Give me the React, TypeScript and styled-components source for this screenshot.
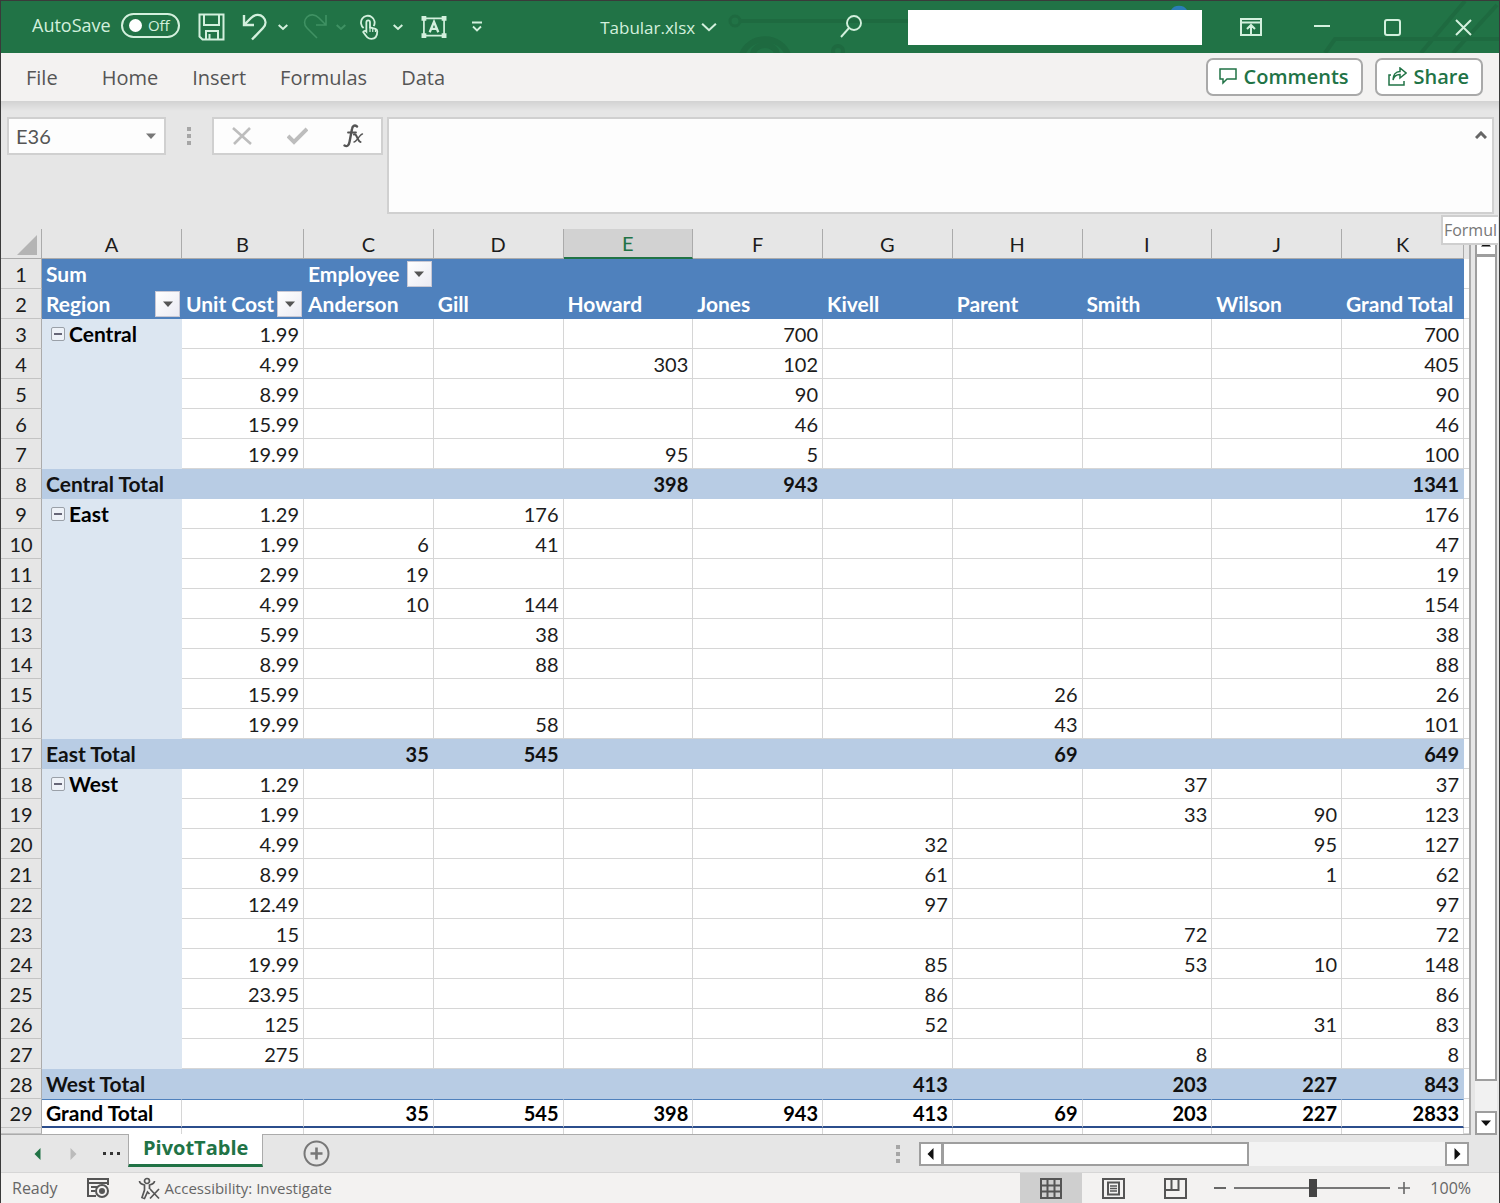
import React from "react";
import styled, { createGlobalStyle, css } from "styled-components";

const uiFont = `"Open Sans", "Noto Sans", sans-serif`;
const cellFont = `Lato, "Open Sans", sans-serif`;

const color = {
  green: "#217346",
  mint: "#d3f0dd",
  chrome: "#e6e6e6",
  ribbon: "#f3f2f1",
  line: "#ababab",
  grid: "#d6d6d6",
  header: "#4f81bd",
  region: "#dce6f1",
  subtotal: "#b8cce4",
};

const GlobalStyle = createGlobalStyle`
  *, *::before, *::after { box-sizing: border-box; }
  body { margin: 0; background: ${color.chrome}; }
  button, input, textarea { font: inherit; color: inherit; }
  button { border: 0; padding: 0; background: none; }
`;

const Window = styled.div`
  display: flex;
  flex-direction: column;
  min-height: 100vh;
  border: 1px solid #3a3a3a;
  overflow: hidden;
  background: ${color.chrome};
  font-family: ${uiFont};
  color: #555;
`;

/* ---------- title bar ---------- */

const TitleBar = styled.header`
  position: relative;
  isolation: isolate;
  display: grid;
  grid-template-columns: 40% 16% 1fr auto auto;
  align-items: center;
  height: 52px;
  background: ${color.green};
  color: ${color.mint};
`;

const Circuit = styled.svg`
  position: absolute;
  right: 0;
  top: 0;
  z-index: -1;
  pointer-events: none;
`;

const QuickAccess = styled.div`
  display: flex;
  align-items: center;
  padding-left: 31px;
  font-size: 18px;
`;

const AutoSave = styled.label`
  display: flex;
  align-items: center;
  gap: 10px;
  padding-bottom: 4px;
`;

const Toggle = styled.span`
  display: flex;
  align-items: center;
  justify-content: space-between;
  width: 59px;
  height: 25px;
  padding: 0 8px 0 6px;
  border: 2px solid ${color.mint};
  border-radius: 13px;
  font-size: 15px;
`;

const ToggleInput = styled.input`
  appearance: none;
  width: 13px;
  height: 13px;
  margin: 0;
  border-radius: 50%;
  background: #fff;
`;

const Tools = styled.div`
  display: flex;
  align-items: center;
  gap: 8px;
  margin-left: 18px;
`;

const SplitTool = styled.div`
  display: flex;
`;

const ToolButton = styled.button<{ $width: number; $dim?: boolean }>`
  display: flex;
  flex: none;
  align-items: center;
  justify-content: center;
  width: ${(p) => p.$width}px;
  height: 32px;
  color: ${(p) => (p.$dim ? "#3f9163" : color.mint)};
`;

const FileName = styled.button`
  display: flex;
  align-items: center;
  gap: 6px;
  height: 100%;
  font-size: 17px;
`;

const SearchButton = styled.button`
  justify-self: start;
  display: flex;
`;

const Account = styled.div`
  width: 294px;
  height: 35px;
  margin-right: 13px;
  background: #fff;
`;

const WindowButtons = styled.div`
  display: flex;
`;

/* ---------- ribbon tabs ---------- */

const Ribbon = styled.nav`
  display: flex;
  align-items: center;
  justify-content: space-between;
  height: 48px;
  padding: 0 16px 0 25px;
  background: ${color.ribbon};
`;

const Menu = styled.div`
  display: flex;
  gap: 34px;
  font-size: 20px;
`;

const MenuButton = styled.button<{ $first?: boolean }>`
  margin-right: ${(p) => (p.$first ? 10 : 0)}px;
`;

const Actions = styled.div`
  display: flex;
  gap: 12px;
`;

const ActionButton = styled.button`
  display: flex;
  align-items: center;
  gap: 7px;
  height: 38px;
  padding: 0 12px 2px 11px;
  border: 2px solid #a9a9a9;
  border-radius: 7px;
  background: #fff;
  color: ${color.green};
  font-size: 20px;
  font-weight: 600;
`;

/* ---------- formula bar ---------- */

const FormulaBar = styled.section`
  position: relative;
  display: flex;
  align-items: flex-start;
  height: 128px;
  padding: 16px 5px 0 6px;
  background: linear-gradient(#d2d2d2, ${color.chrome} 10px);
`;

const NameBox = styled.div`
  display: flex;
  align-items: center;
  width: 159px;
  height: 38px;
  padding: 0 8px 0 7px;
  border: 2px solid #d0d0d0;
  background: #fdfdfd;
`;

const NameInput = styled.input`
  flex: 1;
  min-width: 0;
  padding: 0;
  border: 0;
  background: none;
  font-family: ${cellFont};
  font-size: 20px;
`;

const Grip = styled.svg<{ $margin: number }>`
  flex: none;
  margin: 0 ${(p) => p.$margin}px;
  align-self: ${(p) => (p.$margin > 20 ? "flex-start" : "center")};
`;

const EntryButtons = styled.div`
  display: flex;
  align-items: center;
  justify-content: space-around;
  width: 171px;
  height: 38px;
  margin-right: 4px;
  border: 2px solid #d0d0d0;
  background: #fdfdfd;
`;

const EntryButton = styled.button`
  display: flex;
  color: #bdbdbd;
`;

const FormulaField = styled.div`
  display: flex;
  flex: 1;
  align-items: flex-start;
  height: 97px;
  border: 2px solid #d0d0d0;
  background: #fdfdfd;
`;

const FormulaInput = styled.textarea`
  flex: 1;
  align-self: stretch;
  border: 0;
  resize: none;
  outline: 0;
  background: none;
`;

const CollapseBar = styled.button`
  display: flex;
  padding: 12px 5px;
`;

const Tooltip = styled.div`
  position: absolute;
  right: 1px;
  top: 114px;
  z-index: 2;
  padding: 0 1px;
  border: 2px solid #cfcfcf;
  border-right: 0;
  background: #fff;
  color: #777;
  font-size: 16px;
  line-height: 26px;
`;

/* ---------- sheet ---------- */

const SheetArea = styled.main`
  display: flex;
  flex: 1;
`;

const SheetView = styled.div`
  flex: 1;
  min-width: 0;
  border-right: 2px solid ${color.line};
  border-bottom: 1px solid ${color.line};
  background: #fff;
`;

const Sheet = styled.table`
  width: 100%;
  border-collapse: separate;
  border-spacing: 0;
  table-layout: fixed;
  font-family: ${cellFont};
  font-size: 20px;
  line-height: 24px;
  color: #1c1c1c;
`;

const HeadRow = styled.tr`
  background: ${color.chrome};
`;

const Corner = styled.td`
  padding: 0 4px 3px 0;
  border-right: 1px solid ${color.line};
  border-bottom: 1px solid ${color.line};
  line-height: 0;
  text-align: right;
  vertical-align: bottom;
`;

const ColumnHead = styled.th<{ $selected?: boolean }>`
  height: 30px;
  padding: 0;
  border-right: 1px solid ${color.line};
  border-bottom: 1px solid ${color.line};
  font-weight: 400;
  ${(p) =>
    p.$selected &&
    css`
      background: #d2d2d2;
      border-bottom: 2px solid ${color.green};
      color: ${color.green};
    `}
`;

const RowHead = styled.th`
  padding: 0;
  border-right: 1px solid ${color.line};
  border-bottom: 1px solid #c3c3c3;
  background: ${color.chrome};
  font-weight: 400;
`;

type Kind = "header" | "body" | "subtotal" | "grand";

const Row = styled.tr<{ $kind: Kind }>`
  height: ${(p) => (p.$kind === "grand" ? 29 : 30)}px;
`;

const Cell = styled.td<{ $kind: Kind; $text?: boolean; $region?: boolean }>`
  padding: 0 4px;
  border-right: 1px solid ${color.grid};
  border-bottom: 1px solid ${color.grid};
  background: #fff;
  text-align: ${(p) => (p.$text ? "left" : "right")};
  font-size: ${(p) => (p.$text ? 21 : 20)}px;
  white-space: nowrap;
  ${(p) =>
    p.$kind !== "body" &&
    css`
      font-weight: 700;
    `}
  ${(p) =>
    p.$kind === "header" &&
    css`
      padding-right: 1px;
      border-color: ${color.header};
      background: ${color.header};
      color: #fff;
    `}
  ${(p) =>
    p.$kind === "subtotal" &&
    css`
      border-color: ${color.subtotal};
      background: ${color.subtotal};
      color: #111;
    `}
  ${(p) =>
    p.$kind === "grand" &&
    css`
      border-top: 1px solid ${color.header};
      border-bottom: 2px solid #2b4d8c;
      color: #000;
    `}
  ${(p) =>
    p.$region &&
    css`
      padding-left: 9px;
      border-color: ${color.region};
      background: ${color.region};
      color: #000;
      font-weight: 700;
    `}
`;

const EdgeCell = styled.td<{ $short?: boolean }>`
  height: ${(p) => (p.$short ? 6 : 0)}px;
  padding: 0;
  border-bottom: ${(p) => (p.$short ? 0 : 1)}px solid ${color.grid};
  border-right: ${(p) => (p.$short ? 1 : 0)}px solid ${color.grid};
  background: #fff;
`;

const HeadContent = styled.div`
  display: flex;
  align-items: center;
  justify-content: space-between;
  height: 28px;
`;

const RegionContent = styled.div`
  display: flex;
  align-items: center;
  gap: 4px;
`;

const FilterButton = styled.button`
  display: flex;
  align-items: center;
  justify-content: center;
  width: 25px;
  height: 26px;
  border: 1px solid #c8c8d4;
  background: linear-gradient(135deg, #fff, #ebebf3);
`;

const ToggleRegion = styled.button`
  display: flex;
  align-items: center;
  justify-content: center;
  width: 14px;
  height: 14px;
  border: 1px solid #9aa0a8;
  border-radius: 2px;
  background: #eef2f8;
`;

const VerticalScroll = styled.aside`
  display: flex;
  flex-direction: column;
  width: 22px;
  margin: 3px 2px 0 4px;
  background: #f1f1f1;
`;

const ScrollButton = styled.button`
  display: flex;
  align-items: center;
  justify-content: center;
  flex: none;
  width: 24px;
  height: 24px;
  border: 2px solid #9e9e9e;
  background: #fff;
  ${VerticalScroll} & {
    width: 22px;
  }
`;

const VerticalThumb = styled.div`
  flex: 27;
  margin-top: -1px;
  border: 2px solid #9e9e9e;
  background: #fff;
`;

const VerticalRest = styled.div`
  flex: 1;
`;

/* ---------- sheet tabs ---------- */

const TabBar = styled.footer`
  display: flex;
  align-items: stretch;
  height: 37px;
  padding: 0 30px 0 32px;
`;

const TabNav = styled.div`
  display: flex;
  align-items: center;
  gap: 25px;
  width: 95px;
`;

const NavButton = styled.button`
  display: flex;
`;

const TabButton = styled.button`
  height: 33px;
  margin-top: -1px;
  padding: 0 14px 2px;
  border: 1px solid ${color.line};
  border-top: 0;
  border-bottom: 3px solid ${color.green};
  background: #fff;
  color: ${color.green};
  font-size: 20px;
  font-weight: 700;
  line-height: 26px;
`;

const AddSheet = styled.button`
  margin-left: 40px;
  line-height: 0;
`;

const HorizontalScroll = styled.div`
  display: flex;
  align-self: center;
  width: 550px;
  background: #f3f3f3;
`;

const HorizontalThumb = styled.div`
  flex: 31;
  margin-left: -1px;
  border: 2px solid #9e9e9e;
  background: #fff;
`;

const HorizontalRest = styled.div`
  flex: 20;
`;

const Spacer = styled.div`
  flex: 1;
`;

/* ---------- status bar ---------- */

const StatusBar = styled.footer`
  display: flex;
  align-items: stretch;
  height: 31px;
  padding: 0 28px 0 11px;
  border-top: 1px solid #d6d6d6;
  background: ${color.ribbon};
  color: #666;
  font-size: 16px;
`;

const StatusGroup = styled.div<{ $gap: number }>`
  display: flex;
  align-items: center;
  gap: ${(p) => p.$gap}px;
`;

const StatusButton = styled.button`
  display: flex;
  align-items: center;
  gap: 5px;
  font-size: 15px;
`;

const ViewButton = styled.button<{ $active?: boolean }>`
  display: flex;
  align-items: center;
  justify-content: center;
  align-self: stretch;
  width: 62px;
  background: ${(p) => (p.$active ? "#cfcfcf" : "none")};
`;

const Zoom = styled.div`
  display: flex;
  align-items: center;
  gap: 8px;
  margin-left: 8px;
`;

const ZoomSlider = styled.input`
  appearance: none;
  width: 156px;
  height: 18px;
  margin: 0;
  background: linear-gradient(#777, #777) center / 100% 2px no-repeat;
  &::-webkit-slider-thumb {
    appearance: none;
    width: 8px;
    height: 18px;
    background: #444;
  }
`;

const ZoomValue = styled.button`
  margin-left: 12px;
`;

/* ---------- icons ---------- */

type TriProps = { dir: "up" | "down" | "left" | "right"; size?: number; fill?: string };

const Triangle = ({ dir, size = 10, fill = "#555" }: TriProps) => {
  const d = {
    down: "M0 2.5h10L5 8z",
    up: "M0 7.5h10L5 2z",
    left: "M7.5 -1v12L1.5 5z",
    right: "M2.5 -1v12L8.5 5z",
  }[dir];
  return (
    <svg width={size} height={size} viewBox="0 0 10 10" overflow="visible" aria-hidden>
      <path d={d} fill={fill} />
    </svg>
  );
};

const Chevron = ({ width = 10 }: { width?: number }) => (
  <svg width={width} height={width} viewBox="0 0 10 10" fill="none" stroke="currentColor" strokeWidth={width > 12 ? 1.3 : 2} aria-hidden>
    <path d="M.7 3l4.3 4 4.3-4" />
  </svg>
);

const SaveIcon = () => (
  <svg width="27" height="28" viewBox="0 0 27 28" fill="none" stroke="currentColor" strokeWidth="2" aria-hidden>
    <path d="M1.500 1.500h24v25h-21l-3-3z M6 2v10h15V2 M8 26v-8h12v8 M11.500 21v5" />
  </svg>
);

const UndoIcon = () => (
  <svg width="25" height="28" viewBox="0 0 25 28" fill="none" stroke="currentColor" strokeWidth="2.400" aria-hidden>
    <path d="M2 2v10h10 M2.500 11.500L9 5c4-4 9-4 12-1s3.500 7.500 0 11L10 26.500" />
  </svg>
);

const RedoIcon = () => (
  <svg width="25" height="28" viewBox="0 0 25 28" fill="none" stroke="currentColor" strokeWidth="1.600" aria-hidden>
    <path d="M23 2v10H13 M22.500 11.500L16 5c-4-4-9-4-12-1s-3.500 7.500 0 11l10 10" />
  </svg>
);

const TouchIcon = () => (
  <svg width="20" height="27" viewBox="0 0 22 28" fill="none" stroke="currentColor" strokeWidth="2" aria-hidden>
    <path d="M4 14.500a7.500 7.500 0 1 1 11-2" />
    <path d="M7 18V8.500c0-3 4-3 4 0V14l6 1.500c1.500.5 2 1.500 2 3 0 5-2 8-6.500 8-4 0-5.500-2.500-9-7.500 1-1.500 2.500-1.500 3.500-.5z" />
    <path d="M11 14v5M14 15v4M17 16v3" strokeWidth="1.300" />
  </svg>
);

const TextBoxIcon = () => (
  <svg width="26" height="24" viewBox="0 0 27 25" aria-hidden>
    <g fill="none" stroke="currentColor">
      <path d="M3 3.500h21v18H3z" strokeWidth="1.800" />
      <path d="M9 18l4.500-11L18 18 M10.500 14.500h6" strokeWidth="2.400" />
    </g>
    <path d="M.5 1h5v5h-5z M21.500 1h5v5h-5z M.5 19h5v5h-5z M21.500 19h5v5h-5z" fill="currentColor" />
  </svg>
);

const CustomizeIcon = () => (
  <svg width="12" height="12" viewBox="0 0 12 12" fill="none" stroke="currentColor" strokeWidth="1.800" aria-hidden>
    <path d="M1 1.500h10 M2 5.500l4 4 4-4" />
  </svg>
);

const SearchIcon = () => (
  <svg width="24" height="24" viewBox="0 0 24 24" fill="none" stroke="currentColor" strokeWidth="1.900" aria-hidden>
    <circle cx="14" cy="8" r="7" />
    <path d="M9 13L1 22" />
  </svg>
);

const GripDots = ({ margin, top = 0 }: { margin: number; top?: number }) => (
  <Grip $margin={margin} width="4" height={18 + top} viewBox={`0 ${-top} 4 ${18 + top}`} fill="#a6a6a6" aria-hidden>
    <path d="M0 0h4v4H0zM0 7h4v4H0zM0 14h4v4H0z" />
  </Grip>
);

/* ---------- data ---------- */

const letters = "ABCDEFGHIJK".split("");

type SheetRow = { kind: Kind; cells: Record<string, string> };

const line = (kind: Kind, text: string): SheetRow => ({
  kind,
  cells: Object.fromEntries(text.split("|").map((part) => [part[0], part.slice(2)])),
});

const rows: SheetRow[] = [
  line("header", "A:Sum|C:Employee"),
  line("header", "A:Region|B:Unit Cost|C:Anderson|D:Gill|E:Howard|F:Jones|G:Kivell|H:Parent|I:Smith|J:Wilson|K:Grand Total"),
  line("body", "A:Central|B:1.99|F:700|K:700"),
  line("body", "B:4.99|E:303|F:102|K:405"),
  line("body", "B:8.99|F:90|K:90"),
  line("body", "B:15.99|F:46|K:46"),
  line("body", "B:19.99|E:95|F:5|K:100"),
  line("subtotal", "A:Central Total|E:398|F:943|K:1341"),
  line("body", "A:East|B:1.29|D:176|K:176"),
  line("body", "B:1.99|C:6|D:41|K:47"),
  line("body", "B:2.99|C:19|K:19"),
  line("body", "B:4.99|C:10|D:144|K:154"),
  line("body", "B:5.99|D:38|K:38"),
  line("body", "B:8.99|D:88|K:88"),
  line("body", "B:15.99|H:26|K:26"),
  line("body", "B:19.99|D:58|H:43|K:101"),
  line("subtotal", "A:East Total|C:35|D:545|H:69|K:649"),
  line("body", "A:West|B:1.29|I:37|K:37"),
  line("body", "B:1.99|I:33|J:90|K:123"),
  line("body", "B:4.99|G:32|J:95|K:127"),
  line("body", "B:8.99|G:61|J:1|K:62"),
  line("body", "B:12.49|G:97|K:97"),
  line("body", "B:15|I:72|K:72"),
  line("body", "B:19.99|G:85|I:53|J:10|K:148"),
  line("body", "B:23.95|G:86|K:86"),
  line("body", "B:125|G:52|J:31|K:83"),
  line("body", "B:275|I:8|K:8"),
  line("subtotal", "A:West Total|G:413|I:203|J:227|K:843"),
  line("grand", "A:Grand Total|C:35|D:545|E:398|F:943|G:413|H:69|I:203|J:227|K:2833"),
];

const filtered = ["Employee", "Region", "Unit Cost"];

const CellContent = ({ row, letter }: { row: SheetRow; letter: string }) => {
  const value = row.cells[letter];
  if (!value) return null;
  if (row.kind === "header" && filtered.includes(value)) {
    return (
      <HeadContent>
        {value}
        <FilterButton aria-label={`Filter ${value}`}>
          <Triangle dir="down" />
        </FilterButton>
      </HeadContent>
    );
  }
  if (row.kind === "body" && letter === "A") {
    return (
      <RegionContent>
        <ToggleRegion aria-label={`Collapse ${value}`}>
          <svg width="8" height="2" aria-hidden>
            <path d="M0 1h8" stroke="#667" strokeWidth="2" />
          </svg>
        </ToggleRegion>
        {value}
      </RegionContent>
    );
  }
  return <>{value}</>;
};

export default function App() {
  return (
    <Window>
      <GlobalStyle />
      <TitleBar>
        <Circuit width="780" height="52" viewBox="0 0 780 52" fill="none" stroke="#1e6a40" strokeWidth="4" aria-hidden>
          <circle cx="16" cy="20" r="5" strokeWidth="3" />
          <path d="M22 20h180" />
          <path d="M23 54a24 22 0 0 1 46 0M34 54a12 10 0 0 1 24 0" strokeWidth="6" />
          <circle cx="119" cy="50" r="5" />
          <path d="M606 52l10-14h164M702 52l44-52M734 52l44-48" />
          <path d="M452 9a9 8 0 0 1 16 0" fill="#2a7db8" stroke="none" />
        </Circuit>
        <QuickAccess>
          <AutoSave>
            AutoSave
            <Toggle>
              <ToggleInput type="checkbox" role="switch" />
              Off
            </Toggle>
          </AutoSave>
          <Tools>
            <ToolButton $width={28} aria-label="Save"><SaveIcon /></ToolButton>
            <SplitTool>
              <ToolButton $width={42} aria-label="Undo"><UndoIcon /></ToolButton>
              <ToolButton $width={14} aria-label="Undo history"><Chevron /></ToolButton>
            </SplitTool>
            <SplitTool>
              <ToolButton $width={36} $dim aria-label="Redo"><RedoIcon /></ToolButton>
              <ToolButton $width={14} $dim aria-label="Redo history"><Chevron /></ToolButton>
            </SplitTool>
            <SplitTool>
              <ToolButton $width={28} aria-label="Touch mode"><TouchIcon /></ToolButton>
              <ToolButton $width={28} aria-label="Touch mode options"><Chevron /></ToolButton>
            </SplitTool>
            <ToolButton $width={28} aria-label="Text box"><TextBoxIcon /></ToolButton>
            <ToolButton $width={42} aria-label="Customize toolbar"><CustomizeIcon /></ToolButton>
          </Tools>
        </QuickAccess>
        <FileName>
          Tabular.xlsx
          <Chevron width={16} />
        </FileName>
        <SearchButton aria-label="Search"><SearchIcon /></SearchButton>
        <Account />
        <WindowButtons>
          <ToolButton $width={71} aria-label="Ribbon display options">
            <svg width="22" height="18" viewBox="0 0 22 18" fill="none" stroke="currentColor" strokeWidth="2" aria-hidden>
              <path d="M1 1h20v16H1zM1 4.500h20M11 16V7.500M7 11l4-4 4 4" />
            </svg>
          </ToolButton>
          <ToolButton $width={71} aria-label="Minimize">
            <svg width="16" height="6" aria-hidden><path d="M0 2h16" stroke="currentColor" strokeWidth="2" /></svg>
          </ToolButton>
          <ToolButton $width={71} aria-label="Maximize">
            <svg width="17" height="17" fill="none" stroke="currentColor" strokeWidth="2" aria-hidden>
              <rect x="1" y="1" width="15" height="15" rx="2" />
            </svg>
          </ToolButton>
          <ToolButton $width={71} aria-label="Close">
            <svg width="17" height="17" stroke="currentColor" strokeWidth="2" aria-hidden>
              <path d="M1 1l15 15M16 1L1 16" />
            </svg>
          </ToolButton>
        </WindowButtons>
      </TitleBar>

      <Ribbon>
        <Menu>
          {["File", "Home", "Insert", "Formulas", "Data"].map((name) => (
            <MenuButton key={name} $first={name === "File"}>{name}</MenuButton>
          ))}
        </Menu>
        <Actions>
          <ActionButton>
            <svg width="18" height="17" fill="none" stroke="currentColor" strokeWidth="1.500" aria-hidden>
              <path d="M1 1h16v10H8l-4 4v-4H1z" />
            </svg>
            Comments
          </ActionButton>
          <ActionButton>
            <svg width="19" height="19" fill="none" stroke="currentColor" strokeWidth="1.500" aria-hidden>
              <path d="M3 8H1v10h15v-4M5 13c1-4 3-5.500 7-5.500V11l6-5-6-5v3.500C7.500 4.500 5 8 5 13z" />
            </svg>
            Share
          </ActionButton>
        </Actions>
      </Ribbon>

      <FormulaBar>
        <NameBox>
          <NameInput aria-label="Name box" defaultValue="E36" />
          <NavButton aria-label="Named ranges"><Triangle dir="down" fill="#777" /></NavButton>
        </NameBox>
        <GripDots margin={21} top={10} />
        <EntryButtons>
          <EntryButton aria-label="Cancel">
            <svg width="20" height="18" stroke="currentColor" strokeWidth="2.600" aria-hidden>
              <path d="M1 1l18 16M18 1L2 17" />
            </svg>
          </EntryButton>
          <EntryButton aria-label="Enter">
            <svg width="21" height="18" fill="none" stroke="currentColor" strokeWidth="4" aria-hidden>
              <path d="M1 9l6 6L20 2" />
            </svg>
          </EntryButton>
          <EntryButton aria-label="Insert function">
            <svg width="21" height="24" viewBox="0 0 21 24" fill="none" stroke="#555" strokeLinecap="round" aria-hidden>
              <path d="M14 2.500C11.500.5 9.500 2 9 5L6.500 18c-.6 3.500-2.500 5-5 3.500" strokeWidth="2.400" />
              <path d="M5 8.500h8" strokeWidth="1.800" />
              <path d="M11 10.500c3-1.500 3.500 7.500 6.500 7.500" strokeWidth="2" />
              <path d="M19.500 10c-2.500 0-6 8-8.500 8" strokeWidth="1.400" />
            </svg>
          </EntryButton>
        </EntryButtons>
        <FormulaField>
          <FormulaInput aria-label="Formula" />
          <CollapseBar aria-label="Collapse formula bar">
            <svg width="12" height="8" fill="none" stroke="#666" strokeWidth="3" aria-hidden>
              <path d="M1 7l5-5 5 5" />
            </svg>
          </CollapseBar>
        </FormulaField>
        <Tooltip role="tooltip">Formul</Tooltip>
      </FormulaBar>

      <SheetArea>
        <SheetView>
          <Sheet>
            <colgroup>
              <col style={{ width: 41 }} />
              {letters.map((l) => (
                <col key={l} style={{ width: { A: 140, B: 122, K: 122 }[l] }} />
              ))}
              <col style={{ width: 5 }} />
            </colgroup>
            <thead>
              <HeadRow>
                <Corner>
                  <svg width="20" height="20" aria-label="Select all"><path d="M20 0v20H0z" fill="#b4b4b4" /></svg>
                </Corner>
                {letters.map((l) => (
                  <ColumnHead key={l} scope="col" $selected={l === "E"}>{l}</ColumnHead>
                ))}
                <td />
              </HeadRow>
            </thead>
            <tbody>
              {rows.map((row, index) => (
                <Row key={index} $kind={row.kind}>
                  <RowHead scope="row">{index + 1}</RowHead>
                  {letters.map((l) => (
                    <Cell
                      key={l}
                      $kind={row.kind}
                      $text={row.kind === "header" || l === "A"}
                      $region={row.kind === "body" && l === "A"}
                    >
                      <CellContent row={row} letter={l} />
                    </Cell>
                  ))}
                  <EdgeCell />
                </Row>
              ))}
              <tr>
                <RowHead as="td" />
                {letters.map((l) => (
                  <EdgeCell key={l} $short />
                ))}
                <EdgeCell />
              </tr>
            </tbody>
          </Sheet>
        </SheetView>
        <VerticalScroll>
          <ScrollButton aria-label="Scroll up"><Triangle dir="up" fill="#111" /></ScrollButton>
          <VerticalThumb />
          <VerticalRest />
          <ScrollButton aria-label="Scroll down"><Triangle dir="down" fill="#111" /></ScrollButton>
        </VerticalScroll>
      </SheetArea>

      <TabBar>
        <TabNav>
          <NavButton aria-label="Previous sheet"><Triangle dir="left" fill={color.green} /></NavButton>
          <NavButton aria-label="Next sheet"><Triangle dir="right" fill="#bbb" /></NavButton>
          <NavButton aria-label="More sheets">
            <svg width="17" height="4" fill="#333" aria-hidden><path d="M0 0h3v3H0zM7 0h3v3H7zM14 0h3v3h-3z" /></svg>
          </NavButton>
        </TabNav>
        <TabButton>PivotTable</TabButton>
        <AddSheet aria-label="New sheet">
          <svg width="27" height="27" fill="none" stroke="#777" strokeWidth="2" aria-hidden>
            <circle cx="13.500" cy="13.500" r="12" />
            <path d="M7.500 13.500h12M13.500 7.500v12" strokeWidth="2.600" />
          </svg>
        </AddSheet>
        <Spacer />
        <GripDots margin={19} />
        <HorizontalScroll>
          <ScrollButton aria-label="Scroll left"><Triangle dir="left" fill="#111" /></ScrollButton>
          <HorizontalThumb />
          <HorizontalRest />
          <ScrollButton aria-label="Scroll right"><Triangle dir="right" fill="#111" /></ScrollButton>
        </HorizontalScroll>
      </TabBar>

      <StatusBar>
        <StatusGroup $gap={28}>
          Ready
          <StatusButton aria-label="Record macro">
            <svg width="24" height="22" fill="none" stroke="#555" strokeWidth="2" aria-hidden>
              <path d="M22 8V2H2v17h8M2 6h20M5 10h6M5 14h4" />
              <circle cx="16" cy="14" r="6" />
              <circle cx="16" cy="14" r="2" fill="#555" />
            </svg>
          </StatusButton>
          <StatusButton>
            <svg width="22" height="23" fill="none" stroke="#555" strokeWidth="1.700" aria-hidden>
              <circle cx="9" cy="4" r="2.500" />
              <path d="M1.500 4c0 2 3 3.500 5 4v5L4 20.500l2.500 1L9.500 15l2 2M16.500 4c0 2-3 3.500-5 4v4M12 12l9 9.500M21 12l-9 9.500" />
            </svg>
            Accessibility: Investigate
          </StatusButton>
        </StatusGroup>
        <Spacer />
        <StatusGroup $gap={0}>
          <ViewButton $active aria-label="Normal view">
            <svg width="22" height="21" fill="none" stroke="#555" strokeWidth="2" aria-hidden>
              <path d="M1 1h20v19H1zM1 7.500h20M1 13.500h20M7.500 1v19M14.500 1v19" />
            </svg>
          </ViewButton>
          <ViewButton aria-label="Page layout view">
            <svg width="23" height="21" fill="none" stroke="#555" strokeWidth="2" aria-hidden>
              <path d="M1 1h21v19H1zM6 4.500h11v12H6z" />
              <path d="M8 8h7M8 10.500h7M8 13h7" strokeWidth="1.300" />
            </svg>
          </ViewButton>
          <ViewButton aria-label="Page break preview">
            <svg width="23" height="21" fill="none" stroke="#555" strokeWidth="2" aria-hidden>
              <path d="M1 1h21v19H1zM1 12h13.500V1M7.500 1v11" />
            </svg>
          </ViewButton>
          <Zoom>
            <StatusButton aria-label="Zoom out">
              <svg width="12" height="12" stroke="#666" strokeWidth="2" aria-hidden><path d="M0 6h12" /></svg>
            </StatusButton>
            <ZoomSlider type="range" aria-label="Zoom" min={0} max={200} defaultValue={101} />
            <StatusButton aria-label="Zoom in">
              <svg width="12" height="12" stroke="#666" strokeWidth="1.600" aria-hidden><path d="M0 6h12M6 0v12" /></svg>
            </StatusButton>
            <ZoomValue>100%</ZoomValue>
          </Zoom>
        </StatusGroup>
      </StatusBar>
    </Window>
  );
}
